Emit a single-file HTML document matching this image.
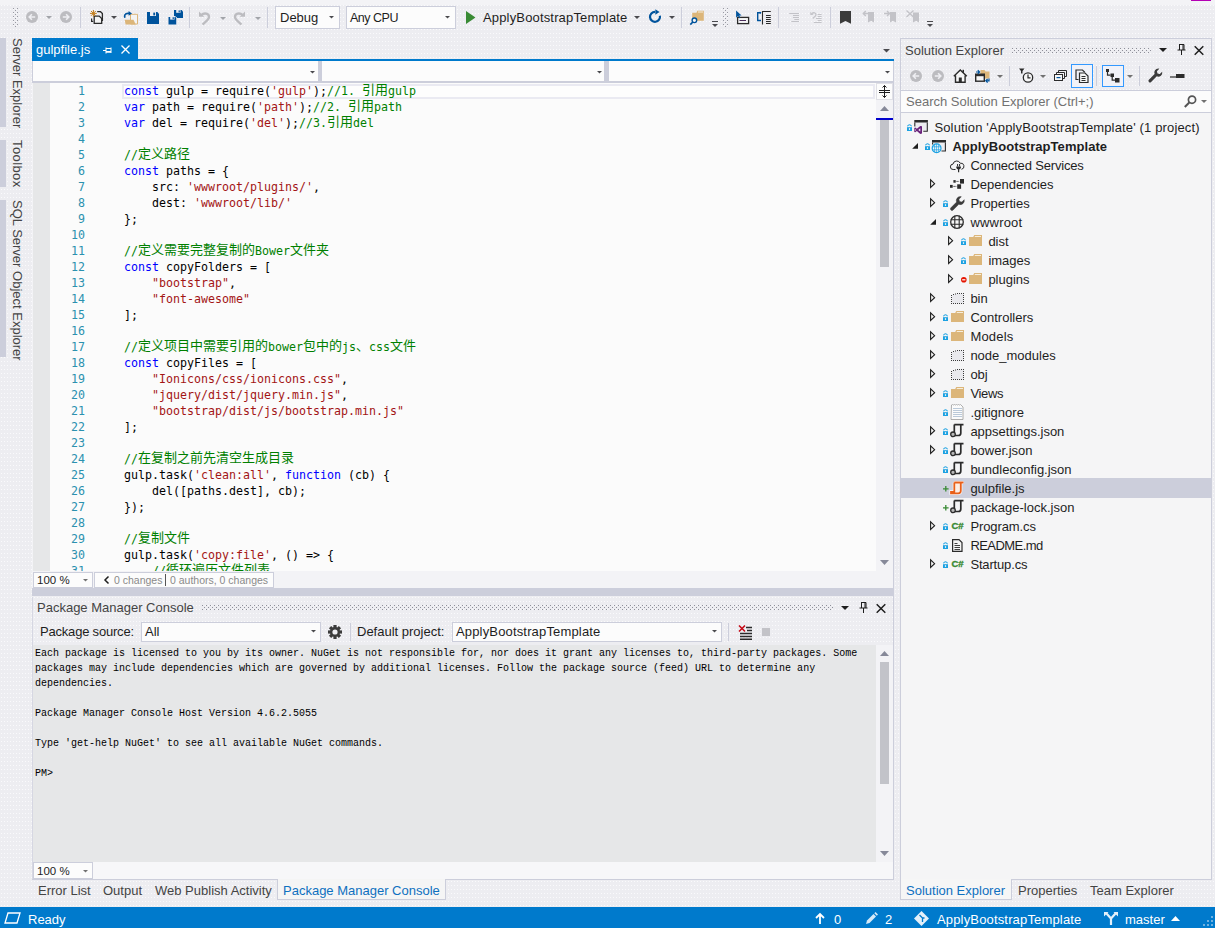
<!DOCTYPE html><html><head><meta charset="utf-8"><title>gulpfile.js</title><style>
html,body{margin:0;padding:0}
body{width:1215px;height:928px;overflow:hidden;background:#ededf1 radial-gradient(circle at 1.5px 1.5px,#fafafc .55px,rgba(250,250,252,0) .9px) 0 0/3px 4px;position:relative;font-family:"Liberation Sans","Noto Sans CJK SC",sans-serif;font-size:13px;color:#1e1e1e}
div{position:absolute;box-sizing:border-box}
svg{position:absolute;overflow:visible}
.t{white-space:pre;line-height:16px;height:16px}
.code{white-space:pre;line-height:16px;height:16px;font-family:"DejaVu Sans Mono","Liberation Mono","Noto Sans CJK SC",monospace;font-size:11.63px;color:#000}
.code .cj{font-size:13px;font-family:"Noto Sans CJK SC",sans-serif;line-height:0;position:relative;top:-1px}
.k{color:#0000ff}.s{color:#a31515}.c{color:#008000}
.ln{white-space:pre;line-height:16px;height:16px;font-family:"DejaVu Sans Mono","Liberation Mono","Noto Sans CJK SC",monospace;font-size:11.63px;color:#2b91af;text-align:right;width:40px}
.con{white-space:pre;line-height:15px;height:15px;font-family:"Liberation Mono","Noto Sans CJK SC",monospace;font-size:10px;color:#000}
.arr{width:0;height:0;border-left:3px solid transparent;border-right:3px solid transparent;border-top:3px solid #1e1e1e}
.arrg{width:0;height:0;border-left:3px solid transparent;border-right:3px solid transparent;border-top:3px solid #717171}
.sep{width:1px;background:#cccedb}
.combo{background:#fcfcfc;border:1px solid #cccedb}
</style></head><body>
<div style="left:0px;top:0px;width:1215px;height:5px;background:#f3f3f6"></div>
<div style="left:1191px;top:0px;width:20px;height:1px;background:#b400b4"></div>
<svg style="left:13px;top:8px" width="5" height="20"><rect x="0" y="0" width="1" height="1" fill="#999aa3"/><rect x="4" y="0" width="1" height="1" fill="#999aa3"/><rect x="2" y="2" width="1" height="1" fill="#999aa3"/><rect x="0" y="4" width="1" height="1" fill="#999aa3"/><rect x="4" y="4" width="1" height="1" fill="#999aa3"/><rect x="2" y="6" width="1" height="1" fill="#999aa3"/><rect x="0" y="8" width="1" height="1" fill="#999aa3"/><rect x="4" y="8" width="1" height="1" fill="#999aa3"/><rect x="2" y="10" width="1" height="1" fill="#999aa3"/><rect x="0" y="12" width="1" height="1" fill="#999aa3"/><rect x="4" y="12" width="1" height="1" fill="#999aa3"/><rect x="2" y="14" width="1" height="1" fill="#999aa3"/><rect x="0" y="16" width="1" height="1" fill="#999aa3"/><rect x="4" y="16" width="1" height="1" fill="#999aa3"/><rect x="2" y="18" width="1" height="1" fill="#999aa3"/></svg>
<svg style="left:723px;top:8px" width="5" height="20"><rect x="0" y="0" width="1" height="1" fill="#999aa3"/><rect x="4" y="0" width="1" height="1" fill="#999aa3"/><rect x="2" y="2" width="1" height="1" fill="#999aa3"/><rect x="0" y="4" width="1" height="1" fill="#999aa3"/><rect x="4" y="4" width="1" height="1" fill="#999aa3"/><rect x="2" y="6" width="1" height="1" fill="#999aa3"/><rect x="0" y="8" width="1" height="1" fill="#999aa3"/><rect x="4" y="8" width="1" height="1" fill="#999aa3"/><rect x="2" y="10" width="1" height="1" fill="#999aa3"/><rect x="0" y="12" width="1" height="1" fill="#999aa3"/><rect x="4" y="12" width="1" height="1" fill="#999aa3"/><rect x="2" y="14" width="1" height="1" fill="#999aa3"/><rect x="0" y="16" width="1" height="1" fill="#999aa3"/><rect x="4" y="16" width="1" height="1" fill="#999aa3"/><rect x="2" y="18" width="1" height="1" fill="#999aa3"/></svg>
<svg style="left:26px;top:11px" width="12" height="12"><circle cx="6" cy="6" r="6" fill="#bcbcc0"/><path d="M9.2 6H3.4M5.9 3.3L3.2 6l2.7 2.7" stroke="#eeeef2" stroke-width="1.6" fill="none"/></svg>
<svg style="left:46px;top:16px" width="6" height="3.5"><path d="M0 0H6L3.0 3.0Z" fill="#a2a4a9"/></svg>
<svg style="left:60px;top:11px" width="12" height="12"><circle cx="6" cy="6" r="6" fill="#bcbcc0"/><path d="M2.8 6h5.8M6.1 3.3L8.8 6 6.1 8.7" stroke="#eeeef2" stroke-width="1.6" fill="none"/></svg>
<div style="left:80px;top:7px;width:1px;height:21px;background:#cccedb"></div>
<svg style="left:90px;top:10px" width="14" height="14"><path d="M7.200 1.700h3.300l1.900 1.900v6.700h-.6" fill="none" stroke="#2b2b2b" stroke-width="1.300"/>
<path d="M1.600 8.500v2.800h1.600" fill="none" stroke="#2b2b2b" stroke-width="1.200"/>
<path d="M4.200 6.100h5l2.500 2.400v4.800H4.200z" fill="#f3f3f3" stroke="#2b2b2b" stroke-width="1.300"/>
<path d="M3.400 0v6.800M0 3.400h6.800M1 1l4.800 4.800M5.800 1L1 5.800" stroke="#c27d1a" stroke-width="1"/></svg>
<svg style="left:111px;top:16px" width="6" height="3.5"><path d="M0 0H6L3.0 3.0Z" fill="#4a4a4e"/></svg>
<svg style="left:123px;top:10px" width="16" height="15"><path d="M7.500 4.300h7v9.700h-7z" fill="#f4f4f4" stroke="#dcb67a" stroke-width="1"/>
<path d="M1.700 9.800h8.800l2.200 4.700H2.600z" fill="#dcb67a"/>
<path d="M1.900 7.800c-.9-2.600.3-4.400 3-4.400h1.500" fill="none" stroke="#00539c" stroke-width="1.700"/>
<path d="M5.600 1l3.400 2.400-3.400 2.400z" fill="#00539c"/></svg>
<svg style="left:147px;top:12px" width="12" height="12"><path d="M0 0h10.3L12 1.7V12H0z" fill="#00539c"/><rect x="3" y="0" width="6" height="4" fill="#eeeef2"/><rect x="6.3" y=".6" width="1.8" height="2.8" fill="#00539c"/></svg>
<svg style="left:168px;top:10px" width="15" height="15"><path d="M6 0h7.6L15 1.4V8H6z" fill="#00539c"/><rect x="8.2" y="0" width="4.3" height="2.8" fill="#eeeef2"/><rect x="10.6" y=".4" width="1.2" height="2" fill="#00539c"/>
<path d="M0 6.5h7.3L8.8 8v7H0z" fill="#00539c" stroke="#eeeef2" stroke-width="1"/><rect x="2.2" y="6.8" width="4.3" height="2.8" fill="#eeeef2"/><rect x="4.6" y="7.2" width="1.2" height="2" fill="#00539c"/></svg>
<div style="left:189px;top:7px;width:1px;height:21px;background:#cccedb"></div>
<svg style="left:198px;top:11px" width="13" height="14"><path d="M1 .5v5.3h5.3z" fill="#bcbcc0"/><path d="M3.2 4.2c3.2-3 7.8-1.7 7.8 1.8 0 2.5-2.7 4.2-6.5 7.5" fill="none" stroke="#bcbcc0" stroke-width="2.300"/></svg>
<svg style="left:220px;top:17px" width="6" height="3.5"><path d="M0 0H6L3.0 3.0Z" fill="#a2a4a9"/></svg>
<svg style="left:233px;top:11px" width="13" height="14"><path d="M12 .5v5.3H6.700z" fill="#bcbcc0"/><path d="M9.800 4.200c-3.200-3-7.800-1.700-7.800 1.800 0 2.500 2.700 4.200 6.500 7.500" fill="none" stroke="#bcbcc0" stroke-width="2.300"/></svg>
<svg style="left:255px;top:17px" width="6" height="3.5"><path d="M0 0H6L3.0 3.0Z" fill="#a2a4a9"/></svg>
<div style="left:267px;top:7px;width:1px;height:21px;background:#cccedb"></div>
<div class="combo" style="left:275px;top:6px;width:65px;height:23px;"></div>
<div class="t" style="left:280px;top:10px;">Debug</div>
<svg style="left:329px;top:16px" width="5" height="3.0"><path d="M0 0H5L2.5 2.5Z" fill="#4a4a4e"/></svg>
<div class="combo" style="left:346px;top:6px;width:110px;height:23px;"></div>
<div class="t" style="left:350px;top:10px;font-size:12.500px;letter-spacing:-0.5px">Any CPU</div>
<svg style="left:445px;top:16px" width="5" height="3.0"><path d="M0 0H5L2.5 2.5Z" fill="#4a4a4e"/></svg>
<svg style="left:466px;top:11px" width="10" height="14"><path d="M0 0l9.500 6.500L0 13z" fill="#388a34"/></svg>
<div class="t" style="left:483px;top:10px;letter-spacing:0.16px">ApplyBootstrapTemplate</div>
<svg style="left:634px;top:16px" width="6" height="3.5"><path d="M0 0H6L3.0 3.0Z" fill="#4a4a4e"/></svg>
<svg style="left:648px;top:10px" width="14" height="14"><path d="M7 1.800A5 5 0 1 0 11.900 5.800" fill="none" stroke="#00539c" stroke-width="2.200"/><path d="M7.300 -.8l4.300 2.700-4.300 2.800z" fill="#00539c"/></svg>
<svg style="left:669px;top:16px" width="6" height="3.5"><path d="M0 0H6L3.0 3.0Z" fill="#4a4a4e"/></svg>
<div style="left:681px;top:7px;width:1px;height:21px;background:#cccedb"></div>
<svg style="left:689px;top:10px" width="16" height="15"><path d="M3.200 2.800h4.300l.8-2h6.500v9.900H3.200z" fill="#dcb67a"/><path d="M9 2h5" stroke="#f7eedc" stroke-width="1"/>
<circle cx="5.400" cy="10.300" r="2.300" fill="#f6f6f6" stroke="#00539c" stroke-width="1.400"/><path d="M3.800 12L1.300 14.600" stroke="#00539c" stroke-width="1.700"/></svg>
<svg style="left:712px;top:21px" width="7" height="7"><rect x="0" y="0" width="6" height="1" fill="#4a4a4e"/><path d="M0 3h6l-3 3z" fill="#4a4a4e"/></svg>
<svg style="left:735px;top:9px" width="15" height="16"><rect x="2.600" y="8.400" width="11" height="6.200" fill="#f6f6f6" stroke="#2b2b2b" stroke-width="1.300"/><path d="M4.500 11.500h6.500" stroke="#4a2b5a" stroke-width="1"/>
<path d="M1.100 1.500v7.200l1.900-1.700 1.300 2.300 1.100-.6-1.200-2.300h2.400z" fill="#00539c"/></svg>
<svg style="left:757px;top:9px" width="15" height="16"><path d="M4 3.800H.7v7.700H4" fill="none" stroke="#00539c" stroke-width="1.400"/><path d="M2.800 2.500l1.800 1.300-1.800 1.300z" fill="#00539c"/>
<path d="M5.500 2v13.500M5 2.500h8.800" stroke="#2b2b2b" stroke-width="1.100" fill="none"/><path d="M9 6.500h4.800M9 8.500h4.800M9 10.500h4.800M9 12.500h4.800M9 14.500h4.800" stroke="#2b2b2b" stroke-width="1.100"/></svg>
<div style="left:778px;top:7px;width:1px;height:21px;background:#cccedb"></div>
<svg style="left:789px;top:11px" width="11" height="12"><path d="M.2 2.500h9.800M4 4.500h6M4 6.500h6M5.300 8.500h4.700M2.300 10.500h7.700" stroke="#c3c3c8" stroke-width="1"/></svg>
<svg style="left:809px;top:10px" width="14" height="14"><path d="M1.300 1.800v3.200h3.200z" fill="#c3c3c8"/><path d="M2.800 3.600c1.700-1.600 4.200-.8 4.200 1.100 0 1.300-1.500 2.200-3.200 3.700" stroke="#c3c3c8" stroke-width="1.300" fill="none"/><path d="M8.700 4.500h3.900M8.700 6.500h3.900M7 8.500h5.600M8.700 10.500h3.900M4.800 12.500h7.800" stroke="#c3c3c8" stroke-width="1"/></svg>
<div style="left:830px;top:7px;width:1px;height:21px;background:#cccedb"></div>
<svg style="left:840px;top:11px" width="11" height="13"><path d="M0 0h11v12.800l-5.500-2.800L0 12.800z" fill="#3b3b3b"/></svg>
<svg style="left:862px;top:10px" width="13" height="14"><path d="M6 2h6v10.500l-3-1.800-3 1.800z" fill="#c3c3c8"/><path d="M7.500 3.500H1.500M3.800 1L1.200 3.500 3.800 6" stroke="#c3c3c8" stroke-width="1.400" fill="none"/></svg>
<svg style="left:884px;top:10px" width="13" height="14"><path d="M6 2h6v10.500l-3-1.800-3 1.800z" fill="#c3c3c8"/><path d="M0 3.500h5.500M3 1l2.600 2.500L3 6" stroke="#c3c3c8" stroke-width="1.400" fill="none"/></svg>
<svg style="left:906px;top:10px" width="13" height="14"><path d="M7 2.500h6v10l-3-1.800-3 1.800z" fill="#c3c3c8"/><path d="M.5.500l7.500 7M7.500.5L.5 7" stroke="#c3c3c8" stroke-width="1.300" fill="none"/></svg>
<svg style="left:927px;top:21px" width="7" height="7"><rect x="0" y="0" width="6" height="1" fill="#4a4a4e"/><path d="M0 3h6l-3 3z" fill="#4a4a4e"/></svg>
<div style="left:0px;top:38px;width:6px;height:89px;background:#cccedb"></div>
<div class="t" style="left:25px;top:38px;transform-origin:0 0;transform:rotate(90deg);color:#444;letter-spacing:0px">Server Explorer</div>
<div style="left:0px;top:140px;width:6px;height:47px;background:#cccedb"></div>
<div class="t" style="left:25px;top:140px;transform-origin:0 0;transform:rotate(90deg);color:#444;letter-spacing:0.4px">Toolbox</div>
<div style="left:0px;top:200px;width:6px;height:157px;background:#cccedb"></div>
<div class="t" style="left:25px;top:200px;transform-origin:0 0;transform:rotate(90deg);color:#444;letter-spacing:0px">SQL Server Object Explorer</div>
<div style="left:32px;top:38px;width:106px;height:22px;background:#007acc"></div>
<div class="t" style="left:36px;top:42px;color:#fff">gulpfile.js</div>
<svg style="left:103px;top:46px" width="8" height="9"><path d="M0 4.500h3M3 1.500v6M3 2.500h5M3 6h5M8 1.500v5.500" stroke="#fff" stroke-width="1" fill="none"/><rect x="3" y="5" width="5" height="1.500" fill="#fff"/></svg>
<svg style="left:121px;top:45px" width="9" height="9"><path d="M.5.5l8 8M8.500.5l-8 8" stroke="#fff" stroke-width="1.300"/></svg>
<div style="left:32px;top:59px;width:862px;height:2px;background:#007acc"></div>
<svg style="left:883px;top:49px" width="7" height="4.0"><path d="M0 0H7L3.5 3.5Z" fill="#4a4a4e"/></svg>
<div style="left:32px;top:61px;width:862px;height:22px;background:#cccedb"></div>
<div style="left:33px;top:61px;width:285px;height:20px;background:#fcfcfc"></div>
<div style="left:322px;top:61px;width:282px;height:20px;background:#fcfcfc"></div>
<div style="left:609px;top:61px;width:284px;height:20px;background:#fcfcfc"></div>
<svg style="left:310px;top:71px" width="5" height="3.0"><path d="M0 0H5L2.5 2.5Z" fill="#4a4a4e"/></svg>
<svg style="left:597px;top:71px" width="5" height="3.0"><path d="M0 0H5L2.5 2.5Z" fill="#4a4a4e"/></svg>
<svg style="left:885px;top:71px" width="5" height="3.0"><path d="M0 0H5L2.5 2.5Z" fill="#4a4a4e"/></svg>
<div style="left:32px;top:83px;width:862px;height:506px;background:#f3f3f6"></div>
<div style="left:893px;top:83px;width:1px;height:797px;background:#cccedb"></div>
<div style="left:33px;top:83px;width:843px;height:488px;background:#fbfbfb"></div>
<div style="left:33px;top:83px;width:17px;height:488px;background:#e6e7e8"></div>
<div style="left:122px;top:84px;width:753px;height:15px;border:2px solid #eaeaf2;background:#fdfdfd"></div>
<div style="left:877px;top:83px;width:16px;height:489px;background:#f3f3f6"></div>
<div style="left:876px;top:83px;width:17px;height:17px;background:#fcfcfc;border:1px solid #e0e0e6"></div>
<svg style="left:879px;top:85px" width="11" height="13"><path d="M5.500 .5v12M0 5.500h11M0 7.500h11M3.500 2.500l2-2 2 2M3.500 10.500l2 2 2-2" stroke="#1e1e1e" stroke-width="1" fill="none"/></svg>
<svg style="left:880px;top:106px" width="9" height="5"><path d="M0 5h9L4.500 0z" fill="#868999"/></svg>
<div style="left:876px;top:118px;width:17px;height:2px;background:#0000cd"></div>
<div style="left:880px;top:120px;width:9px;height:147px;background:#c2c3c9"></div>
<svg style="left:880px;top:560px" width="9" height="5"><path d="M0 0h9L4.500 5z" fill="#868999"/></svg>
<div style="left:33px;top:83px;width:843px;height:488px;overflow:hidden">
<div class="ln" style="left:12px;top:0px">1</div>
<div class="code" style="left:91px;top:0px"><span class="k">const</span> gulp = require(<span class="s">'gulp'</span>);<span class="c">//1. <span class="cj">引用</span>gulp</span></div>
<div class="ln" style="left:12px;top:16px">2</div>
<div class="code" style="left:91px;top:16px"><span class="k">var</span> path = require(<span class="s">'path'</span>);<span class="c">//2. <span class="cj">引用</span>path</span></div>
<div class="ln" style="left:12px;top:32px">3</div>
<div class="code" style="left:91px;top:32px"><span class="k">var</span> del = require(<span class="s">'del'</span>);<span class="c">//3.<span class="cj">引用</span>del</span></div>
<div class="ln" style="left:12px;top:48px">4</div>
<div class="ln" style="left:12px;top:64px">5</div>
<div class="code" style="left:91px;top:64px"><span class="c">//<span class="cj">定义路径</span></span></div>
<div class="ln" style="left:12px;top:80px">6</div>
<div class="code" style="left:91px;top:80px"><span class="k">const</span> paths = {</div>
<div class="ln" style="left:12px;top:96px">7</div>
<div class="code" style="left:91px;top:96px">    src: <span class="s">'wwwroot/plugins/'</span>,</div>
<div class="ln" style="left:12px;top:112px">8</div>
<div class="code" style="left:91px;top:112px">    dest: <span class="s">'wwwroot/lib/'</span></div>
<div class="ln" style="left:12px;top:128px">9</div>
<div class="code" style="left:91px;top:128px">};</div>
<div class="ln" style="left:12px;top:144px">10</div>
<div class="ln" style="left:12px;top:160px">11</div>
<div class="code" style="left:91px;top:160px"><span class="c">//<span class="cj">定义需要完整复制的</span>Bower<span class="cj">文件夹</span></span></div>
<div class="ln" style="left:12px;top:176px">12</div>
<div class="code" style="left:91px;top:176px"><span class="k">const</span> copyFolders = [</div>
<div class="ln" style="left:12px;top:192px">13</div>
<div class="code" style="left:91px;top:192px">    <span class="s">"bootstrap"</span>,</div>
<div class="ln" style="left:12px;top:208px">14</div>
<div class="code" style="left:91px;top:208px">    <span class="s">"font-awesome"</span></div>
<div class="ln" style="left:12px;top:224px">15</div>
<div class="code" style="left:91px;top:224px">];</div>
<div class="ln" style="left:12px;top:240px">16</div>
<div class="ln" style="left:12px;top:256px">17</div>
<div class="code" style="left:91px;top:256px"><span class="c">//<span class="cj">定义项目中需要引用的</span>bower<span class="cj">包中的</span>js<span class="cj">、</span>css<span class="cj">文件</span></span></div>
<div class="ln" style="left:12px;top:272px">18</div>
<div class="code" style="left:91px;top:272px"><span class="k">const</span> copyFiles = [</div>
<div class="ln" style="left:12px;top:288px">19</div>
<div class="code" style="left:91px;top:288px">    <span class="s">"Ionicons/css/ionicons.css"</span>,</div>
<div class="ln" style="left:12px;top:304px">20</div>
<div class="code" style="left:91px;top:304px">    <span class="s">"jquery/dist/jquery.min.js"</span>,</div>
<div class="ln" style="left:12px;top:320px">21</div>
<div class="code" style="left:91px;top:320px">    <span class="s">"bootstrap/dist/js/bootstrap.min.js"</span></div>
<div class="ln" style="left:12px;top:336px">22</div>
<div class="code" style="left:91px;top:336px">];</div>
<div class="ln" style="left:12px;top:352px">23</div>
<div class="ln" style="left:12px;top:368px">24</div>
<div class="code" style="left:91px;top:368px"><span class="c">//<span class="cj">在复制之前先清空生成目录</span></span></div>
<div class="ln" style="left:12px;top:384px">25</div>
<div class="code" style="left:91px;top:384px">gulp.task(<span class="s">'clean:all'</span>, <span class="k">function</span> (cb) {</div>
<div class="ln" style="left:12px;top:400px">26</div>
<div class="code" style="left:91px;top:400px">    del([paths.dest], cb);</div>
<div class="ln" style="left:12px;top:416px">27</div>
<div class="code" style="left:91px;top:416px">});</div>
<div class="ln" style="left:12px;top:432px">28</div>
<div class="ln" style="left:12px;top:448px">29</div>
<div class="code" style="left:91px;top:448px"><span class="c">//<span class="cj">复制文件</span></span></div>
<div class="ln" style="left:12px;top:464px">30</div>
<div class="code" style="left:91px;top:464px">gulp.task(<span class="s">'copy:file'</span>, () =&gt; {</div>
<div class="ln" style="left:12px;top:480px">31</div>
<div class="code" style="left:91px;top:480px">    <span class="c">//<span class="cj">循环遍历文件列表</span></span></div>
</div>
<div style="left:33px;top:572px;width:60px;height:16px;background:#fcfcfc;border:1px solid #cccedb"></div>
<div class="t" style="left:37px;top:572px;font-size:11.500px;color:#1e1e1e">100 %</div>
<svg style="left:83px;top:579px" width="5" height="3.0"><path d="M0 0H5L2.5 2.5Z" fill="#717171"/></svg>
<div style="left:94px;top:572px;width:180px;height:16px;background:#fcfcfc;border:1px solid #cccedb"></div>
<svg style="left:104px;top:576px" width="5" height="8"><path d="M4.500.5L1 4l3.500 3.500" stroke="#1e1e1e" stroke-width="1.500" fill="none"/></svg>
<div class="t" style="left:114px;top:572px;font-size:10.500px;color:#8a8a8a">0 changes</div>
<div style="left:165px;top:574px;width:1px;height:12px;background:#555"></div>
<div class="t" style="left:170px;top:572px;font-size:10.500px;color:#8a8a8a">0 authors, 0 changes</div>
<div style="left:32px;top:588px;width:861px;height:7.5px;background:#cccedb"></div>
<div class="t" style="left:37px;top:600px;color:#444">Package Manager Console</div>
<svg style="left:202px;top:605px" width="632" height="5"><defs><pattern id="p202_605" width="4" height="4" patternUnits="userSpaceOnUse"><rect x="0" y="0" width="1" height="1" fill="#8f909a"/><rect x="2" y="2" width="1" height="1" fill="#8f909a"/></pattern></defs><rect width="632" height="5" fill="url(#p202_605)"/></svg>
<svg style="left:841px;top:606px" width="8" height="4"><path d="M0 0h8L4 4z" fill="#1e1e1e"/></svg>
<svg style="left:859px;top:602px" width="9" height="11"><path d="M2 .5h5M2.500 .5v5.500M6 .5v5.500M7 .5v5.500M.5 6h8M4.500 6v5" stroke="#1e1e1e" stroke-width="1" fill="none"/></svg>
<svg style="left:875.5px;top:603.5px" width="10" height="9"><path d="M.7.3l8.600 8.400M9.300.3L.7 8.700" stroke="#1e1e1e" stroke-width="1.500"/></svg>
<div class="t" style="left:40px;top:624px;letter-spacing:-0.2px">Package source:</div>
<div class="combo" style="left:141px;top:622px;width:180px;height:20px;"></div>
<div class="t" style="left:145px;top:624px;">All</div>
<svg style="left:311px;top:630px" width="5" height="3.0"><path d="M0 0H5L2.5 2.5Z" fill="#4a4a4e"/></svg>
<svg style="left:328px;top:625px" width="14" height="14"><g transform="translate(7 7)"><g fill="#3b3b3b"><rect x="-1.600" y="-7" width="3.200" height="14"/><rect x="-1.600" y="-7" width="3.200" height="14" transform="rotate(45)"/><rect x="-1.600" y="-7" width="3.200" height="14" transform="rotate(90)"/><rect x="-1.600" y="-7" width="3.200" height="14" transform="rotate(135)"/></g><circle r="5" fill="#3b3b3b"/><circle r="2.600" fill="#eeeef2"/></g></svg>
<div style="left:350px;top:623px;width:1px;height:18px;background:#cccedb"></div>
<div class="t" style="left:357px;top:624px;">Default project:</div>
<div class="combo" style="left:452px;top:622px;width:270px;height:20px;"></div>
<div class="t" style="left:456px;top:624px;letter-spacing:0.16px">ApplyBootstrapTemplate</div>
<svg style="left:712px;top:630px" width="5" height="3.0"><path d="M0 0H5L2.5 2.5Z" fill="#4a4a4e"/></svg>
<div style="left:728px;top:623px;width:1px;height:18px;background:#cccedb"></div>
<svg style="left:738px;top:625px" width="15" height="15"><path d="M1 .5l6 6M7 .5l-6 6" stroke="#c50b17" stroke-width="1.600"/><path d="M8 2.500h6M9 5.500h5M2 8.500h12M2 11.500h12M2 14.200h12" stroke="#2b2b2b" stroke-width="1.500"/></svg>
<div style="left:762px;top:628px;width:8px;height:8px;background:#c3c3c8"></div>
<div style="left:33px;top:645px;width:843px;height:217px;background:#e6e7e8"></div>
<div class="con" style="left:35px;top:646px">Each package is licensed to you by its owner. NuGet is not responsible for, nor does it grant any licenses to, third-party packages. Some</div>
<div class="con" style="left:35px;top:661px">packages may include dependencies which are governed by additional licenses. Follow the package source (feed) URL to determine any</div>
<div class="con" style="left:35px;top:676px">dependencies.</div>
<div class="con" style="left:35px;top:706px">Package Manager Console Host Version 4.6.2.5055</div>
<div class="con" style="left:35px;top:736px">Type 'get-help NuGet' to see all available NuGet commands.</div>
<div class="con" style="left:35px;top:766px">PM&gt;</div>
<div style="left:876px;top:645px;width:17px;height:217px;background:#f3f3f6"></div>
<svg style="left:880px;top:651px" width="9" height="5"><path d="M0 5h9L4.500 0z" fill="#868999"/></svg>
<div style="left:880px;top:662px;width:9px;height:122px;background:#c2c3c9"></div>
<svg style="left:880px;top:851px" width="9" height="5"><path d="M0 0h9L4.500 5z" fill="#868999"/></svg>
<div style="left:33px;top:862px;width:860px;height:18px;background:#f7f7f9"></div>
<div style="left:32px;top:597px;width:1px;height:283px;background:#d6d7e2"></div>
<div style="left:33px;top:862px;width:60px;height:17px;background:#fcfcfc;border:1px solid #cccedb"></div>
<div class="t" style="left:37px;top:863px;font-size:11.500px">100 %</div>
<svg style="left:83px;top:870px" width="5" height="3.0"><path d="M0 0H5L2.5 2.5Z" fill="#717171"/></svg>
<div style="left:32px;top:879px;width:862px;height:1px;background:#cccedb"></div>
<div style="left:277px;top:879px;width:169px;height:21px;background:#f5f5f5;border:1px solid #cccedb;border-top:none"></div>
<div class="t" style="left:38px;top:883px;color:#444">Error List</div>
<div class="t" style="left:103px;top:883px;color:#444">Output</div>
<div class="t" style="left:155px;top:883px;color:#444">Web Publish Activity</div>
<div class="t" style="left:283px;top:883px;color:#0e70c0">Package Manager Console</div>
<div style="left:900px;top:38px;width:312px;height:842px;border:1px solid #cccedb;border-bottom:none"></div>
<div class="t" style="left:905px;top:43px;color:#444">Solution Explorer</div>
<svg style="left:1012px;top:48px" width="140" height="5"><defs><pattern id="p1012_48" width="4" height="4" patternUnits="userSpaceOnUse"><rect x="0" y="0" width="1" height="1" fill="#8f909a"/><rect x="2" y="2" width="1" height="1" fill="#8f909a"/></pattern></defs><rect width="140" height="5" fill="url(#p1012_48)"/></svg>
<svg style="left:1159px;top:48px" width="8" height="4"><path d="M0 0h8L4 4z" fill="#1e1e1e"/></svg>
<svg style="left:1177px;top:44px" width="9" height="11"><path d="M2 .5h5M2.500 .5v5.500M6 .5v5.500M7 .5v5.500M.5 6h8M4.500 6v5" stroke="#1e1e1e" stroke-width="1" fill="none"/></svg>
<svg style="left:1193.5px;top:45.5px" width="10" height="9"><path d="M.7.3l8.600 8.400M9.300.3L.7 8.700" stroke="#1e1e1e" stroke-width="1.500"/></svg>
<svg style="left:910px;top:70px" width="12" height="12"><circle cx="6" cy="6" r="6" fill="#bcbcc0"/><path d="M9.200 6H3.400M5.900 3.300L3.200 6l2.700 2.700" stroke="#eeeef2" stroke-width="1.600" fill="none"/></svg>
<svg style="left:932px;top:70px" width="12" height="12"><circle cx="6" cy="6" r="6" fill="#bcbcc0"/><path d="M2.800 6h5.800M6.100 3.300L8.800 6 6.100 8.700" stroke="#eeeef2" stroke-width="1.600" fill="none"/></svg>
<svg style="left:953px;top:69px" width="15" height="14"><path d="M.8 7.300L7.300 1l6.500 6.300M2.500 6.500V13.300h9.600V6.500" fill="#f6f6f6" stroke="#2b2b2b" stroke-width="1.400"/><rect x="5.800" y="8.500" width="3" height="4.800" fill="#2b2b2b"/><rect x="9.500" y=".8" width="1.500" height="3" fill="#2b2b2b"/></svg>
<svg style="left:975px;top:69px" width="15" height="14"><path d="M5.500 1h4l1 1.500h4v7h-9z" fill="#dcb67a"/><rect x=".7" y="5.200" width="8.600" height="7" fill="#f6f6f6" stroke="#2b2b2b" stroke-width="1.400"/><rect x=".7" y="5.200" width="8.600" height="2" fill="#2b2b2b"/>
<path d="M1 3h3M2.800 1.200L4.600 3 2.800 4.800" stroke="#00539c" stroke-width="1.200" fill="none"/><path d="M14 9.500v2.300h-3M12.600 10l-1.800 1.800 1.800 1.800" stroke="#00539c" stroke-width="1.200" fill="none"/></svg>
<svg style="left:997px;top:75px" width="6" height="3.5"><path d="M0 0H6L3.0 3.0Z" fill="#717171"/></svg>
<div style="left:1009px;top:66px;width:1px;height:20px;background:#cccedb"></div>
<svg style="left:1019px;top:68px" width="15" height="15"><path d="M0 .5h5.500L3.500 3v2.500h-1.500V3z" fill="#2b2b2b"/><circle cx="9" cy="9.500" r="4.700" fill="#f6f6f6" stroke="#2b2b2b" stroke-width="1.300"/><path d="M9 6.500v3.300h2.500" stroke="#2b2b2b" stroke-width="1.200" fill="none"/></svg>
<svg style="left:1040px;top:75px" width="6" height="3.5"><path d="M0 0H6L3.0 3.0Z" fill="#717171"/></svg>
<svg style="left:1054px;top:70px" width="13" height="11"><path d="M4.500 2.500v-2h8v6h-2M2.500 4.500v-2h8v6h-2" fill="none" stroke="#2b2b2b" stroke-width="1"/><rect x=".5" y="4.500" width="8" height="6" fill="#f6f6f6" stroke="#2b2b2b" stroke-width="1"/><rect x="2.500" y="7" width="4" height="1.200" fill="#00539c"/></svg>
<div style="left:1071px;top:64px;width:22px;height:24px;border:1px solid #3399ff;background:#f1f2f8"></div>
<svg style="left:1075px;top:69px" width="14" height="14"><path d="M3.500 10.500h-2.500v-9.500h6l.0 0M7 1h.5l2 2v.5" fill="none" stroke="#2b2b2b" stroke-width="1.200"/><path d="M4.500 4h5.500l3 3v6.500h-8.500z" fill="#f6f6f6" stroke="#2b2b2b" stroke-width="1.200"/><path d="M6.500 7.500h4M6.500 9.500h4M6.500 11.500h4" stroke="#2b2b2b" stroke-width="1"/></svg>
<div style="left:1096px;top:66px;width:1px;height:20px;background:#cccedb"></div>
<div style="left:1102px;top:65px;width:22px;height:22px;border:1px solid #3399ff;background:#f1f2f8"></div>
<svg style="left:1106px;top:69px" width="14" height="14"><rect x="0" y="0" width="3" height="3" fill="#2b2b2b"/><rect x="4.500" y="4.500" width="3.500" height="3.500" fill="#2b2b2b"/><rect x="9" y="9" width="4.500" height="4.500" fill="#2b2b2b"/><path d="M1.500 3v3.200h3M6.200 8v3.200h3" stroke="#2b2b2b" stroke-width="1.200" fill="none"/></svg>
<svg style="left:1127px;top:75px" width="6" height="3.5"><path d="M0 0H6L3.0 3.0Z" fill="#717171"/></svg>
<div style="left:1139px;top:66px;width:1px;height:20px;background:#cccedb"></div>
<svg style="left:1148px;top:68px" width="15" height="15"><path d="M10.300.6a4 4 0 0 0-3.700 5.500L.9 11.800a1.500 1.500 0 0 0 2.200 2.200l5.700-5.700a4 4 0 0 0 5.400-4.600l-2.400 2.400-2.300-.6-.6-2.300 2.400-2.400a4 4 0 0 0-1-.2z" fill="#3b3b3b"/></svg>
<svg style="left:1170px;top:73px" width="15" height="6"><path d="M0 4h6" stroke="#2b2b2b" stroke-width="1.200"/><rect x="6" y="1" width="8.500" height="4" fill="#2b2b2b"/></svg>
<div style="left:901px;top:90px;width:310px;height:23px;background:#fcfcfc;border:1px solid #cccedb;border-left:none;border-right:none"></div>
<div class="t" style="left:906px;top:94px;color:#717171">Search Solution Explorer (Ctrl+;)</div>
<svg style="left:1184px;top:95px" width="13" height="13"><circle cx="8" cy="4.700" r="3.600" fill="none" stroke="#555" stroke-width="1.700"/><path d="M5.500 7.300L.8 12" stroke="#555" stroke-width="2"/></svg>
<svg style="left:1201px;top:100px" width="6" height="3.5"><path d="M0 0H6L3.0 3.0Z" fill="#717171"/></svg>
<div style="left:901px;top:113px;width:310px;height:767px;background:#f5f5f6"></div>
<div style="left:901px;top:478px;width:310px;height:19.5px;background:#cccedb"></div>
<svg style="left:907px;top:123.9px" width="5" height="7"><path d="M.4 2.300Q2.500 -.7 4.600 2.300" fill="none" stroke="#1ba1e2" stroke-width="1.100"/><rect x="0" y="3.200" width="5" height="3.800" fill="#1ba1e2"/><rect x="1.900" y="4.200" width="1.200" height="1.700" fill="#f6f6f6"/></svg>
<svg style="left:914px;top:120.0px" width="14" height="14"><rect x=".5" y="2" width="13" height="9.500" fill="#ececf0"/><path d="M.3 1.250h13.600" stroke="#2b2b2b" stroke-width="2.500"/><path d="M.8 2.500v4M13.300 2.500v9.300M9.300 11.300h4.500" stroke="#2b2b2b" stroke-width="1.100" fill="none"/><path d="M8 6.300v7.200l-1.700.4-3.400-2.900-1.700 1.300-.9-.4v-4l.9-.4 1.700 1.300 3.400-2.900zM6.300 8.300l-2 1.600 2 1.600zM1.200 8.900v2l1-1z" fill="#68217a" fill-rule="evenodd"/></svg>
<div class="t" style="left:934.4px;top:120.0px;letter-spacing:0.15px">Solution 'ApplyBootstrapTemplate' (1 project)</div>
<svg style="left:911.7px;top:143.0px" width="6" height="6"><path d="M6 0v5.800H.2z" fill="#1e1e1e"/></svg>
<svg style="left:925px;top:142.9px" width="5" height="7"><path d="M.4 2.300Q2.500 -.7 4.600 2.300" fill="none" stroke="#1ba1e2" stroke-width="1.100"/><rect x="0" y="3.200" width="5" height="3.800" fill="#1ba1e2"/><rect x="1.900" y="4.200" width="1.200" height="1.700" fill="#f6f6f6"/></svg>
<svg style="left:932px;top:140.0px" width="14" height="14"><rect x=".5" y="2" width="13" height="9" fill="#ececf0"/><path d="M0 1.250h14" stroke="#2b2b2b" stroke-width="2.500"/><path d="M.6 2.500v2M13.400 2.500v9M9.500 11h4.400" stroke="#2b2b2b" stroke-width="1.100" fill="none"/><circle cx="4.600" cy="8.300" r="4.400" fill="#f6f6f6" stroke="#1ba1e2" stroke-width="1.200"/><path d="M.4 6.800h8.400M.4 9.800h8.400M4.600 3.900v8.800M2.600 4.500v7.600M6.600 4.500v7.600" stroke="#1ba1e2" stroke-width=".7" fill="none"/></svg>
<div class="t" style="left:952.4px;top:139.0px;font-weight:bold;letter-spacing:0.05px">ApplyBootstrapTemplate</div>
<svg style="left:950px;top:159.5px" width="14" height="13"><path d="M5.500 9.500H3.200a2.700 2.700 0 0 1-.2-5.400A3.800 3.800 0 0 1 10.200 3.200a3.100 3.100 0 0 1 1.300 6.100" fill="none" stroke="#2b2b2b" stroke-width="1"/><path d="M7.600 4v2.400M9.600 4v2.400" stroke="#2b2b2b" stroke-width="1"/><path d="M6.300 6.600h4.600v.6a2.300 2.300 0 0 1-4.600 0z" fill="#2b2b2b"/><path d="M8.600 9v3.200" stroke="#2b2b2b" stroke-width="1.200"/></svg>
<div class="t" style="left:970.4px;top:158.0px;letter-spacing:-0.17px">Connected Services</div>
<svg style="left:930px;top:178.9px" width="6" height="10"><path d="M.6.900v7.600l4-3.800z" fill="#f6f6f6" stroke="#1e1e1e" stroke-width="1.100"/></svg>
<svg style="left:950px;top:179.0px" width="14" height="10"><rect x="3.400" y="1.100" width="2.300" height="2.600" fill="#2b2b2b"/><rect x="10" y="0" width="4" height="4.600" fill="#2b2b2b"/><rect x="0" y="5.900" width="2.700" height="2.900" fill="#2b2b2b"/><rect x="7.200" y="5.300" width="3.900" height="4.500" fill="#2b2b2b"/><path d="M6.500 2.400h2.600M3.500 7.400h2.800" stroke="#2b2b2b" stroke-width="1" stroke-dasharray="1.200 .8"/></svg>
<div class="t" style="left:970.4px;top:177.0px;">Dependencies</div>
<svg style="left:930px;top:197.9px" width="6" height="10"><path d="M.6.900v7.600l4-3.800z" fill="#f6f6f6" stroke="#1e1e1e" stroke-width="1.100"/></svg>
<svg style="left:943px;top:199.9px" width="5" height="7"><path d="M.4 2.300Q2.500 -.7 4.600 2.300" fill="none" stroke="#1ba1e2" stroke-width="1.100"/><rect x="0" y="3.200" width="5" height="3.800" fill="#1ba1e2"/><rect x="1.900" y="4.200" width="1.200" height="1.700" fill="#f6f6f6"/></svg>
<svg style="left:949.5px;top:195.5px" width="15" height="15"><path d="M10.300.6a4 4 0 0 0-3.700 5.500L.9 11.800a1.500 1.500 0 0 0 2.200 2.200l5.700-5.700a4 4 0 0 0 5.400-4.600l-2.400 2.400-2.300-.6-.6-2.300 2.400-2.400a4 4 0 0 0-1-.2z" fill="#3b3b3b" stroke="#3b3b3b" stroke-width=".5"/></svg>
<div class="t" style="left:970.4px;top:196.0px;">Properties</div>
<svg style="left:929.7px;top:219.0px" width="6" height="6"><path d="M6 0v5.800H.2z" fill="#1e1e1e"/></svg>
<svg style="left:943px;top:218.9px" width="5" height="7"><path d="M.4 2.300Q2.500 -.7 4.600 2.300" fill="none" stroke="#1ba1e2" stroke-width="1.100"/><rect x="0" y="3.200" width="5" height="3.800" fill="#1ba1e2"/><rect x="1.900" y="4.200" width="1.200" height="1.700" fill="#f6f6f6"/></svg>
<svg style="left:950px;top:214.9px" width="14" height="14"><circle cx="7" cy="7" r="6.300" fill="#f6f6f6" stroke="#2b2b2b" stroke-width="1.300"/><path d="M.7 4.800h12.600M.7 9.200h12.600M4.800 .8v12.400M9.200 .8v12.400" stroke="#2b2b2b" stroke-width="1.100"/></svg>
<div class="t" style="left:970.4px;top:215.0px;letter-spacing:0.2px">wwwroot</div>
<svg style="left:948px;top:235.9px" width="6" height="10"><path d="M.6.900v7.600l4-3.800z" fill="#f6f6f6" stroke="#1e1e1e" stroke-width="1.100"/></svg>
<svg style="left:961px;top:237.9px" width="5" height="7"><path d="M.4 2.300Q2.500 -.7 4.600 2.300" fill="none" stroke="#1ba1e2" stroke-width="1.100"/><rect x="0" y="3.200" width="5" height="3.800" fill="#1ba1e2"/><rect x="1.900" y="4.200" width="1.200" height="1.700" fill="#f6f6f6"/></svg>
<svg style="left:969px;top:234.9px" width="13" height="11"><path d="M0 2h4.200l1-2H13v11H0z" fill="#dcb67a"/><path d="M5.800 1.500h6.200" stroke="#f7eedc" stroke-width="1"/></svg>
<div class="t" style="left:988.4px;top:234.0px;">dist</div>
<svg style="left:948px;top:254.9px" width="6" height="10"><path d="M.6.900v7.600l4-3.800z" fill="#f6f6f6" stroke="#1e1e1e" stroke-width="1.100"/></svg>
<svg style="left:961px;top:256.9px" width="5" height="7"><path d="M.4 2.300Q2.500 -.7 4.600 2.300" fill="none" stroke="#1ba1e2" stroke-width="1.100"/><rect x="0" y="3.200" width="5" height="3.800" fill="#1ba1e2"/><rect x="1.900" y="4.200" width="1.200" height="1.700" fill="#f6f6f6"/></svg>
<svg style="left:969px;top:253.9px" width="13" height="11"><path d="M0 2h4.200l1-2H13v11H0z" fill="#dcb67a"/><path d="M5.800 1.500h6.200" stroke="#f7eedc" stroke-width="1"/></svg>
<div class="t" style="left:988.4px;top:253.0px;">images</div>
<svg style="left:948px;top:273.9px" width="6" height="10"><path d="M.6.900v7.600l4-3.800z" fill="#f6f6f6" stroke="#1e1e1e" stroke-width="1.100"/></svg>
<svg style="left:961px;top:276.5px" width="6" height="6"><circle cx="2.800" cy="2.800" r="2.800" fill="#e51400"/><rect x="1.200" y="2.200" width="3.200" height="1.200" fill="#fff"/></svg>
<svg style="left:969px;top:272.9px" width="13" height="11"><path d="M0 2h4.200l1-2H13v11H0z" fill="#dcb67a"/><path d="M5.800 1.500h6.200" stroke="#f7eedc" stroke-width="1"/></svg>
<div class="t" style="left:988.4px;top:272.0px;">plugins</div>
<svg style="left:930px;top:292.9px" width="6" height="10"><path d="M.6.900v7.600l4-3.800z" fill="#f6f6f6" stroke="#1e1e1e" stroke-width="1.100"/></svg>
<svg style="left:951px;top:293.0px" width="13" height="11"><path d="M1 2.500L5 .8h7.500v9.700H1z" fill="#e9e9ed"/><rect x="0" y="2" width="1" height="1" fill="#3a3a3a"/><rect x="0" y="4" width="1" height="1" fill="#3a3a3a"/><rect x="0" y="6" width="1" height="1" fill="#3a3a3a"/><rect x="0" y="8" width="1" height="1" fill="#3a3a3a"/><rect x="0" y="10" width="1" height="1" fill="#3a3a3a"/><rect x="2" y="1" width="1" height="1" fill="#3a3a3a"/><rect x="2" y="10" width="1" height="1" fill="#3a3a3a"/><rect x="4" y="0.5" width="1" height="1" fill="#3a3a3a"/><rect x="4" y="10" width="1" height="1" fill="#3a3a3a"/><rect x="6" y="0" width="1" height="1" fill="#3a3a3a"/><rect x="6" y="10" width="1" height="1" fill="#3a3a3a"/><rect x="8" y="0" width="1" height="1" fill="#3a3a3a"/><rect x="8" y="10" width="1" height="1" fill="#3a3a3a"/><rect x="10" y="0" width="1" height="1" fill="#3a3a3a"/><rect x="10" y="10" width="1" height="1" fill="#3a3a3a"/><rect x="12" y="0" width="1" height="1" fill="#3a3a3a"/><rect x="12" y="2" width="1" height="1" fill="#3a3a3a"/><rect x="12" y="4" width="1" height="1" fill="#3a3a3a"/><rect x="12" y="6" width="1" height="1" fill="#3a3a3a"/><rect x="12" y="8" width="1" height="1" fill="#3a3a3a"/><rect x="12" y="10" width="1" height="1" fill="#3a3a3a"/></svg>
<div class="t" style="left:970.4px;top:291.0px;">bin</div>
<svg style="left:930px;top:311.9px" width="6" height="10"><path d="M.6.900v7.600l4-3.800z" fill="#f6f6f6" stroke="#1e1e1e" stroke-width="1.100"/></svg>
<svg style="left:943px;top:313.9px" width="5" height="7"><path d="M.4 2.300Q2.500 -.7 4.600 2.300" fill="none" stroke="#1ba1e2" stroke-width="1.100"/><rect x="0" y="3.200" width="5" height="3.800" fill="#1ba1e2"/><rect x="1.900" y="4.200" width="1.200" height="1.700" fill="#f6f6f6"/></svg>
<svg style="left:951px;top:310.9px" width="13" height="11"><path d="M0 2h4.200l1-2H13v11H0z" fill="#dcb67a"/><path d="M5.800 1.500h6.200" stroke="#f7eedc" stroke-width="1"/></svg>
<div class="t" style="left:970.4px;top:310.0px;">Controllers</div>
<svg style="left:930px;top:330.9px" width="6" height="10"><path d="M.6.900v7.600l4-3.800z" fill="#f6f6f6" stroke="#1e1e1e" stroke-width="1.100"/></svg>
<svg style="left:943px;top:332.9px" width="5" height="7"><path d="M.4 2.300Q2.500 -.7 4.600 2.300" fill="none" stroke="#1ba1e2" stroke-width="1.100"/><rect x="0" y="3.200" width="5" height="3.800" fill="#1ba1e2"/><rect x="1.900" y="4.200" width="1.200" height="1.700" fill="#f6f6f6"/></svg>
<svg style="left:951px;top:329.9px" width="13" height="11"><path d="M0 2h4.200l1-2H13v11H0z" fill="#dcb67a"/><path d="M5.800 1.500h6.200" stroke="#f7eedc" stroke-width="1"/></svg>
<div class="t" style="left:970.4px;top:329.0px;letter-spacing:0.2px">Models</div>
<svg style="left:930px;top:349.9px" width="6" height="10"><path d="M.6.900v7.600l4-3.800z" fill="#f6f6f6" stroke="#1e1e1e" stroke-width="1.100"/></svg>
<svg style="left:951px;top:350.0px" width="13" height="11"><path d="M1 2.500L5 .8h7.500v9.700H1z" fill="#e9e9ed"/><rect x="0" y="2" width="1" height="1" fill="#3a3a3a"/><rect x="0" y="4" width="1" height="1" fill="#3a3a3a"/><rect x="0" y="6" width="1" height="1" fill="#3a3a3a"/><rect x="0" y="8" width="1" height="1" fill="#3a3a3a"/><rect x="0" y="10" width="1" height="1" fill="#3a3a3a"/><rect x="2" y="1" width="1" height="1" fill="#3a3a3a"/><rect x="2" y="10" width="1" height="1" fill="#3a3a3a"/><rect x="4" y="0.5" width="1" height="1" fill="#3a3a3a"/><rect x="4" y="10" width="1" height="1" fill="#3a3a3a"/><rect x="6" y="0" width="1" height="1" fill="#3a3a3a"/><rect x="6" y="10" width="1" height="1" fill="#3a3a3a"/><rect x="8" y="0" width="1" height="1" fill="#3a3a3a"/><rect x="8" y="10" width="1" height="1" fill="#3a3a3a"/><rect x="10" y="0" width="1" height="1" fill="#3a3a3a"/><rect x="10" y="10" width="1" height="1" fill="#3a3a3a"/><rect x="12" y="0" width="1" height="1" fill="#3a3a3a"/><rect x="12" y="2" width="1" height="1" fill="#3a3a3a"/><rect x="12" y="4" width="1" height="1" fill="#3a3a3a"/><rect x="12" y="6" width="1" height="1" fill="#3a3a3a"/><rect x="12" y="8" width="1" height="1" fill="#3a3a3a"/><rect x="12" y="10" width="1" height="1" fill="#3a3a3a"/></svg>
<div class="t" style="left:970.4px;top:348.0px;">node_modules</div>
<svg style="left:930px;top:368.9px" width="6" height="10"><path d="M.6.900v7.600l4-3.800z" fill="#f6f6f6" stroke="#1e1e1e" stroke-width="1.100"/></svg>
<svg style="left:951px;top:369.0px" width="13" height="11"><path d="M1 2.500L5 .8h7.500v9.700H1z" fill="#e9e9ed"/><rect x="0" y="2" width="1" height="1" fill="#3a3a3a"/><rect x="0" y="4" width="1" height="1" fill="#3a3a3a"/><rect x="0" y="6" width="1" height="1" fill="#3a3a3a"/><rect x="0" y="8" width="1" height="1" fill="#3a3a3a"/><rect x="0" y="10" width="1" height="1" fill="#3a3a3a"/><rect x="2" y="1" width="1" height="1" fill="#3a3a3a"/><rect x="2" y="10" width="1" height="1" fill="#3a3a3a"/><rect x="4" y="0.5" width="1" height="1" fill="#3a3a3a"/><rect x="4" y="10" width="1" height="1" fill="#3a3a3a"/><rect x="6" y="0" width="1" height="1" fill="#3a3a3a"/><rect x="6" y="10" width="1" height="1" fill="#3a3a3a"/><rect x="8" y="0" width="1" height="1" fill="#3a3a3a"/><rect x="8" y="10" width="1" height="1" fill="#3a3a3a"/><rect x="10" y="0" width="1" height="1" fill="#3a3a3a"/><rect x="10" y="10" width="1" height="1" fill="#3a3a3a"/><rect x="12" y="0" width="1" height="1" fill="#3a3a3a"/><rect x="12" y="2" width="1" height="1" fill="#3a3a3a"/><rect x="12" y="4" width="1" height="1" fill="#3a3a3a"/><rect x="12" y="6" width="1" height="1" fill="#3a3a3a"/><rect x="12" y="8" width="1" height="1" fill="#3a3a3a"/><rect x="12" y="10" width="1" height="1" fill="#3a3a3a"/></svg>
<div class="t" style="left:970.4px;top:367.0px;">obj</div>
<svg style="left:930px;top:387.9px" width="6" height="10"><path d="M.6.900v7.600l4-3.800z" fill="#f6f6f6" stroke="#1e1e1e" stroke-width="1.100"/></svg>
<svg style="left:943px;top:389.9px" width="5" height="7"><path d="M.4 2.300Q2.500 -.7 4.600 2.300" fill="none" stroke="#1ba1e2" stroke-width="1.100"/><rect x="0" y="3.200" width="5" height="3.800" fill="#1ba1e2"/><rect x="1.900" y="4.200" width="1.200" height="1.700" fill="#f6f6f6"/></svg>
<svg style="left:951px;top:386.9px" width="13" height="11"><path d="M0 2h4.200l1-2H13v11H0z" fill="#dcb67a"/><path d="M5.800 1.500h6.200" stroke="#f7eedc" stroke-width="1"/></svg>
<div class="t" style="left:970.4px;top:386.0px;letter-spacing:-0.35px">Views</div>
<svg style="left:943px;top:408.9px" width="5" height="7"><path d="M.4 2.300Q2.500 -.7 4.600 2.300" fill="none" stroke="#1ba1e2" stroke-width="1.100"/><rect x="0" y="3.200" width="5" height="3.800" fill="#1ba1e2"/><rect x="1.900" y="4.200" width="1.200" height="1.700" fill="#f6f6f6"/></svg>
<svg style="left:951px;top:403.5px" width="13" height="16"><path d="M.5 1l1-.5 1 .5 1-.5 1 .5 1-.5 1 .5 1-.5 1 .5 1-.5 2.500 2.500v12.500h-12z" fill="#fbfbfb" stroke="#9a9a9a" stroke-width=".8"/><path d="M2 4.500h9M2 6.500h9M2 8.500h9M2 10.500h9M2 12.500h9" stroke="#a9bcd0" stroke-width=".8"/></svg>
<div class="t" style="left:970.4px;top:405.0px;">.gitignore</div>
<svg style="left:930px;top:425.9px" width="6" height="10"><path d="M.6.900v7.600l4-3.800z" fill="#f6f6f6" stroke="#1e1e1e" stroke-width="1.100"/></svg>
<svg style="left:943px;top:427.9px" width="5" height="7"><path d="M.4 2.300Q2.500 -.7 4.600 2.300" fill="none" stroke="#1ba1e2" stroke-width="1.100"/><rect x="0" y="3.200" width="5" height="3.800" fill="#1ba1e2"/><rect x="1.900" y="4.200" width="1.200" height="1.700" fill="#f6f6f6"/></svg>
<svg style="left:950px;top:423.3px" width="14" height="14"><path d="M4.300 1.600h9.200M4.300 1.600v7.500M10.800 2v8c0 1.500-1 2.500-2.500 2.500H5" fill="none" stroke="#2b2b2b" stroke-width="1.700"/><circle cx="3" cy="11.300" r="2.300" fill="#b8b8b8" stroke="#2b2b2b" stroke-width="1.300"/></svg>
<div class="t" style="left:970.4px;top:424.0px;">appsettings.json</div>
<svg style="left:930px;top:444.9px" width="6" height="10"><path d="M.6.900v7.600l4-3.800z" fill="#f6f6f6" stroke="#1e1e1e" stroke-width="1.100"/></svg>
<svg style="left:943px;top:446.9px" width="5" height="7"><path d="M.4 2.300Q2.500 -.7 4.600 2.300" fill="none" stroke="#1ba1e2" stroke-width="1.100"/><rect x="0" y="3.200" width="5" height="3.800" fill="#1ba1e2"/><rect x="1.900" y="4.200" width="1.200" height="1.700" fill="#f6f6f6"/></svg>
<svg style="left:950px;top:442.3px" width="14" height="14"><path d="M4.300 1.600h9.200M4.300 1.600v7.500M10.800 2v8c0 1.500-1 2.500-2.500 2.500H5" fill="none" stroke="#2b2b2b" stroke-width="1.700"/><circle cx="3" cy="11.300" r="2.300" fill="#b8b8b8" stroke="#2b2b2b" stroke-width="1.300"/></svg>
<div class="t" style="left:970.4px;top:443.0px;">bower.json</div>
<svg style="left:943px;top:465.9px" width="5" height="7"><path d="M.4 2.300Q2.500 -.7 4.600 2.300" fill="none" stroke="#1ba1e2" stroke-width="1.100"/><rect x="0" y="3.200" width="5" height="3.800" fill="#1ba1e2"/><rect x="1.900" y="4.200" width="1.200" height="1.700" fill="#f6f6f6"/></svg>
<svg style="left:950px;top:461.3px" width="14" height="14"><path d="M4.300 1.600h9.200M4.300 1.600v7.500M10.800 2v8c0 1.500-1 2.500-2.500 2.500H5" fill="none" stroke="#2b2b2b" stroke-width="1.700"/><circle cx="3" cy="11.300" r="2.300" fill="#b8b8b8" stroke="#2b2b2b" stroke-width="1.300"/></svg>
<div class="t" style="left:970.4px;top:462.0px;">bundleconfig.json</div>
<svg style="left:943px;top:485.5px" width="6" height="6"><path d="M2.800 0v5.600M0 2.800h5.600" stroke="#388a34" stroke-width="1.300"/></svg>
<svg style="left:950px;top:480.5px" width="14" height="14"><path d="M4.300 1.500h9.200M4.300 1.500v9.300H1v1.500h7.300c1.500 0 2.500-1 2.500-2.500V2" fill="#fdeee4" stroke="#fff" stroke-width="3"/><path d="M4.300 1.500h9.200M4.300 1.500v9.300H1v1.500h7.300c1.500 0 2.500-1 2.500-2.500V2" fill="#fdeee4" stroke="#e8601a" stroke-width="1.800"/></svg>
<div class="t" style="left:970.4px;top:481.0px;">gulpfile.js</div>
<svg style="left:943px;top:504.5px" width="6" height="6"><path d="M2.800 0v5.600M0 2.800h5.600" stroke="#388a34" stroke-width="1.300"/></svg>
<svg style="left:950px;top:499.3px" width="14" height="14"><path d="M4.300 1.600h9.200M4.300 1.600v7.500M10.800 2v8c0 1.500-1 2.500-2.500 2.500H5" fill="none" stroke="#2b2b2b" stroke-width="1.700"/><circle cx="3" cy="11.300" r="2.300" fill="#b8b8b8" stroke="#2b2b2b" stroke-width="1.300"/></svg>
<div class="t" style="left:970.4px;top:500.0px;">package-lock.json</div>
<svg style="left:930px;top:520.9px" width="6" height="10"><path d="M.6.900v7.600l4-3.800z" fill="#f6f6f6" stroke="#1e1e1e" stroke-width="1.100"/></svg>
<svg style="left:943px;top:522.9px" width="5" height="7"><path d="M.4 2.300Q2.500 -.7 4.600 2.300" fill="none" stroke="#1ba1e2" stroke-width="1.100"/><rect x="0" y="3.200" width="5" height="3.800" fill="#1ba1e2"/><rect x="1.900" y="4.200" width="1.200" height="1.700" fill="#f6f6f6"/></svg>
<div class="t" style="left:951.5px;top:518.0px;font-size:9.500px;font-weight:bold;color:#388a34;letter-spacing:-0.2px;-webkit-text-stroke:.35px #388a34">C#</div>
<div class="t" style="left:970.4px;top:519.0px;letter-spacing:-0.1px">Program.cs</div>
<svg style="left:943px;top:541.9px" width="5" height="7"><path d="M.4 2.300Q2.500 -.7 4.600 2.300" fill="none" stroke="#1ba1e2" stroke-width="1.100"/><rect x="0" y="3.200" width="5" height="3.800" fill="#1ba1e2"/><rect x="1.900" y="4.200" width="1.200" height="1.700" fill="#f6f6f6"/></svg>
<svg style="left:952px;top:539.0px" width="11" height="13"><path d="M.6.600h6.400l3 3v8.800H.6z" fill="#f6f6f6" stroke="#2b2b2b" stroke-width="1.200"/><path d="M2.500 4.500h3M2.500 6.500h5.500M2.500 8.500h5.500M2.500 10.500h5.500" stroke="#2b2b2b" stroke-width=".9"/></svg>
<div class="t" style="left:970.4px;top:538.0px;letter-spacing:-0.55px">README.md</div>
<svg style="left:930px;top:558.9px" width="6" height="10"><path d="M.6.900v7.600l4-3.800z" fill="#f6f6f6" stroke="#1e1e1e" stroke-width="1.100"/></svg>
<svg style="left:943px;top:560.9px" width="5" height="7"><path d="M.4 2.300Q2.500 -.7 4.600 2.300" fill="none" stroke="#1ba1e2" stroke-width="1.100"/><rect x="0" y="3.200" width="5" height="3.800" fill="#1ba1e2"/><rect x="1.900" y="4.200" width="1.200" height="1.700" fill="#f6f6f6"/></svg>
<div class="t" style="left:951.5px;top:556.0px;font-size:9.500px;font-weight:bold;color:#388a34;letter-spacing:-0.2px;-webkit-text-stroke:.35px #388a34">C#</div>
<div class="t" style="left:970.4px;top:557.0px;letter-spacing:-0.16px">Startup.cs</div>
<div style="left:901px;top:879px;width:310px;height:1px;background:#cccedb"></div>
<div style="left:900px;top:879px;width:112px;height:21px;background:#f6f6f6;border:1px solid #cccedb;border-top:none"></div>
<div class="t" style="left:906px;top:883px;color:#0e70c0">Solution Explorer</div>
<div class="t" style="left:1018px;top:883px;color:#444">Properties</div>
<div class="t" style="left:1090px;top:883px;color:#444">Team Explorer</div>
<div style="left:0px;top:907px;width:1215px;height:21px;background:#007acc"></div>
<svg style="left:4px;top:912px" width="17" height="12"><path d="M4 1h12l-3 10H1z" fill="none" stroke="#fff" stroke-width="1.300"/></svg>
<div class="t" style="left:28px;top:911.5px;color:#fff">Ready</div>
<svg style="left:815px;top:913px" width="10" height="11"><path d="M5 1v10M1 5l4-4 4 4" stroke="#fff" stroke-width="1.800" fill="none"/></svg>
<div class="t" style="left:834px;top:911.5px;color:#fff">0</div>
<svg style="left:866px;top:912px" width="12" height="12"><path d="M0 12l1-3.500 6.500-6.500 2.500 2.500-6.500 6.500z" fill="#d6e9f7"/><path d="M8.300 1.200l1.200-1.200 2.500 2.500-1.200 1.200z" fill="#d6e9f7"/></svg>
<div class="t" style="left:885px;top:911.5px;color:#fff">2</div>
<svg style="left:914px;top:911px" width="15" height="15"><path d="M7.500 0l7.500 7.500-7.500 7.500L0 7.500z" fill="#e3f0fa"/><path d="M5.500 4l3 3v4M8.500 7h2" stroke="#007acc" stroke-width="1.300" fill="none"/></svg>
<div class="t" style="left:937px;top:911.5px;color:#fff;letter-spacing:0.16px">ApplyBootstrapTemplate</div>
<svg style="left:1104px;top:912px" width="14" height="13"><path d="M2 1l5 5.500V13M12 1l-5 5.500" stroke="#e3f0fa" stroke-width="2.200" fill="none"/><path d="M0 0h4.500L0 4.500zM14 0H9.500L14 4.500z" fill="#e3f0fa"/></svg>
<div class="t" style="left:1125px;top:911.5px;color:#fff">master</div>
<svg style="left:1171px;top:916px" width="9" height="5"><path d="M0 5h9L4.500 0z" fill="#fff"/></svg>
<svg style="left:1203px;top:916px" width="10" height="10"><g fill="#6fb1e0"><rect x="8" y="0" width="2" height="2"/><rect x="8" y="4" width="2" height="2"/><rect x="8" y="8" width="2" height="2"/><rect x="4" y="4" width="2" height="2"/><rect x="4" y="8" width="2" height="2"/><rect x="0" y="8" width="2" height="2"/></g></svg>
</body></html>
